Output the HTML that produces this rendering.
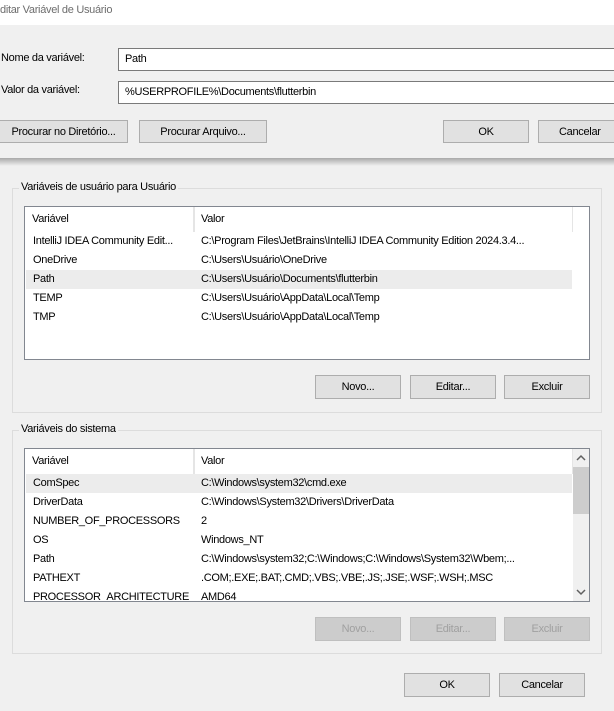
<!DOCTYPE html>
<html><head><meta charset="utf-8"><style>
*{box-sizing:border-box;margin:0;padding:0}
body{width:614px;height:711px;background:#f0f0f0;font-family:"Liberation Sans",sans-serif;font-size:11px;letter-spacing:-0.3px;color:#000;position:relative;overflow:hidden;white-space:nowrap}
.a{position:absolute}
.btn{position:absolute;background:#e1e1e1;border:1px solid #adadad;text-align:center;line-height:22px}
.dis{background:#cccccc;border-color:#bfbfbf;color:#a0a0a0}
.inp{position:absolute;background:#fff;border:1px solid #7a7a7a;padding-left:6px;line-height:21px}
.grp{position:absolute;border:1px solid #dcdcdc}
.leg{position:absolute;background:#f0f0f0;padding:0 2px;top:-8px;left:6px;color:#000}
.list{position:absolute;background:#fff;border:1px solid #828790;overflow:hidden}
.row{position:absolute;left:1px;height:19px;line-height:19px;width:546px}
.row span{position:absolute}
.c1{left:7px}.c2{left:175px}
.hdr{position:absolute;left:0;top:0;height:25px;line-height:25px;border-right:1px solid #e5e5e5}
.hl{background:#ececec}
</style></head><body>
<div class="a" style="left:0;top:0;width:614px;height:25px;background:#fff"></div>
<div class="a" style="left:0;top:4px;color:#6d6d6d">ditar Variável de Usuário</div>
<div class="a" style="left:0;top:158px;width:614px;height:8px;background:linear-gradient(#a8a8a8,#f0f0f0)"></div>
<div class="a" style="left:1px;top:52px">Nome da variável:</div>
<div class="a" style="left:1px;top:84px">Valor da variável:</div>
<div class="inp" style="left:118px;top:48px;width:500px;height:23px">Path</div>
<div class="inp" style="left:118px;top:81px;width:500px;height:23px">%USERPROFILE%\Documents\flutterbin</div>
<div class="btn" style="left:-1px;top:120px;width:129px;height:23px">Procurar no Diretório...</div>
<div class="btn" style="left:139px;top:120px;width:128px;height:23px">Procurar Arquivo...</div>
<div class="btn" style="left:443px;top:120px;width:86px;height:23px">OK</div>
<div class="btn" style="left:538px;top:120px;width:86px;height:23px;text-align:left;padding-left:20px">Cancelar</div>

<div class="grp" style="left:12px;top:188px;width:590px;height:225px"><div class="leg">Variáveis de usuário para Usuário</div></div>
<div class="list" style="left:24px;top:206px;width:566px;height:154px">
 <div class="hdr" style="width:169px;padding-left:7px">Variável</div>
 <div class="hdr" style="left:169px;width:379px;padding-left:6px;border-left:1px solid #e5e5e5">Valor</div>
 <div class="row" style="top:25px"><span class="c1">IntelliJ IDEA Community Edit...</span><span class="c2">C:\Program Files\JetBrains\IntelliJ IDEA Community Edition 2024.3.4...</span></div>
 <div class="row" style="top:44px"><span class="c1">OneDrive</span><span class="c2">C:\Users\Usuário\OneDrive</span></div>
 <div class="row hl" style="top:63px"><span class="c1">Path</span><span class="c2">C:\Users\Usuário\Documents\flutterbin</span></div>
 <div class="row" style="top:82px"><span class="c1">TEMP</span><span class="c2">C:\Users\Usuário\AppData\Local\Temp</span></div>
 <div class="row" style="top:101px"><span class="c1">TMP</span><span class="c2">C:\Users\Usuário\AppData\Local\Temp</span></div>
</div>
<div class="btn" style="left:315px;top:375px;width:86px;height:24px">Novo...</div>
<div class="btn" style="left:410px;top:375px;width:86px;height:24px">Editar...</div>
<div class="btn" style="left:504px;top:375px;width:86px;height:24px">Excluir</div>

<div class="grp" style="left:12px;top:430px;width:590px;height:224px"><div class="leg">Variáveis do sistema</div></div>
<div class="list" style="left:24px;top:448px;width:566px;height:154px">
 <div class="hdr" style="width:169px;padding-left:7px">Variável</div>
 <div class="hdr" style="left:169px;width:379px;padding-left:6px;border-left:1px solid #e5e5e5">Valor</div>
 <div class="row hl" style="top:25px"><span class="c1">ComSpec</span><span class="c2">C:\Windows\system32\cmd.exe</span></div>
 <div class="row" style="top:44px"><span class="c1">DriverData</span><span class="c2">C:\Windows\System32\Drivers\DriverData</span></div>
 <div class="row" style="top:63px"><span class="c1">NUMBER_OF_PROCESSORS</span><span class="c2">2</span></div>
 <div class="row" style="top:82px"><span class="c1">OS</span><span class="c2">Windows_NT</span></div>
 <div class="row" style="top:101px"><span class="c1">Path</span><span class="c2">C:\Windows\system32;C:\Windows;C:\Windows\System32\Wbem;...</span></div>
 <div class="row" style="top:120px"><span class="c1">PATHEXT</span><span class="c2">.COM;.EXE;.BAT;.CMD;.VBS;.VBE;.JS;.JSE;.WSF;.WSH;.MSC</span></div>
 <div class="row" style="top:139px"><span class="c1">PROCESSOR_ARCHITECTURE</span><span class="c2">AMD64</span></div>
 <div class="a" style="left:548px;top:0;width:17px;height:152px;background:#f0f0f0"></div>
 <div class="a" style="left:548px;top:18px;width:16px;height:47px;background:#cdcdcd"></div>
 <svg class="a" style="left:551px;top:5px" width="10" height="8"><path d="M1 6 L5 2 L9 6" stroke="#606060" stroke-width="1.5" fill="none"/></svg>
 <svg class="a" style="left:551px;top:139px" width="10" height="8"><path d="M1 2 L5 6 L9 2" stroke="#606060" stroke-width="1.5" fill="none"/></svg>
</div>
<div class="btn dis" style="left:315px;top:617px;width:86px;height:24px">Novo...</div>
<div class="btn dis" style="left:410px;top:617px;width:86px;height:24px">Editar...</div>
<div class="btn dis" style="left:504px;top:617px;width:86px;height:24px">Excluir</div>

<div class="btn" style="left:404px;top:673px;width:86px;height:24px">OK</div>
<div class="btn" style="left:499px;top:673px;width:86px;height:24px">Cancelar</div>
</body></html>
